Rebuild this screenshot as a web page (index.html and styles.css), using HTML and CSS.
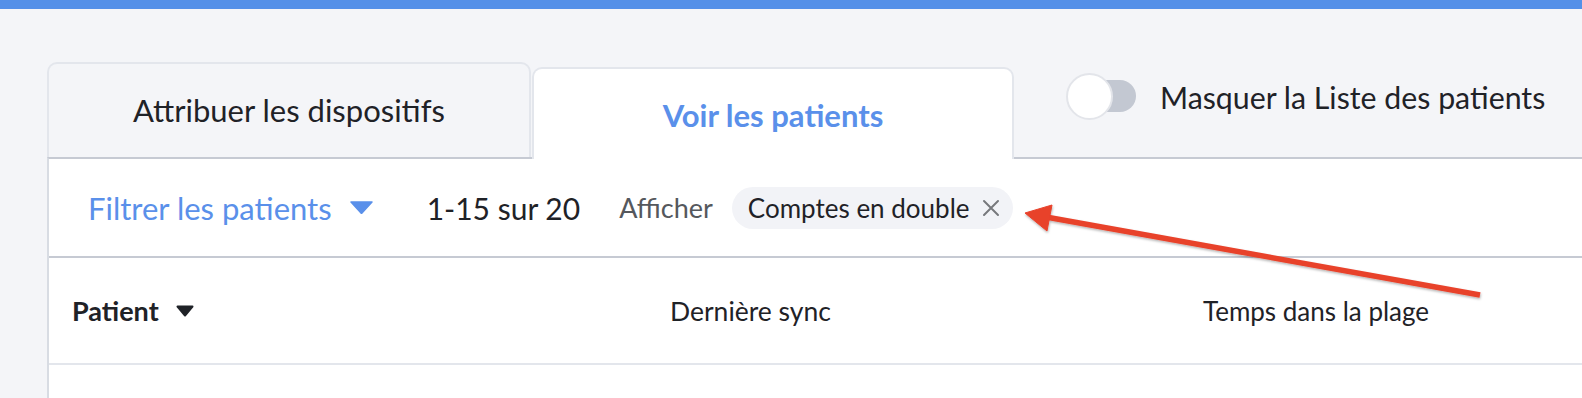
FILE: index.html
```html
<!DOCTYPE html>
<html lang="fr">
<head>
<meta charset="utf-8">
<title>Patients</title>
<link rel="stylesheet" href="styles.css">
</head>
<body>
<div class="topbar"></div>
<div class="main">
  <div class="tabs">
    <div class="tab">Attribuer les dispositifs</div>
    <div class="tab tab-active">Voir les patients</div>
    <div class="toggle-wrap">
      <div class="toggle"><div class="track"></div><div class="knob"></div></div>
      <span class="toggle-label">Masquer la Liste des patients</span>
    </div>
  </div>
  <div class="panel">
    <div class="filter-row">
      <span class="filter">Filtrer les patients</span>
      <svg class="caret-blue" width="23" height="13" viewBox="0 0 23 13"><path d="M1 1 H22 L11.5 12.5 Z" fill="#5a90ea" stroke="#5a90ea" stroke-width="1.5" stroke-linejoin="round"/></svg>
      <span class="count">1-15 sur 20</span>
      <span class="show">Afficher</span>
      <span class="chip">Comptes en double
        <svg class="chip-x" width="18" height="18" viewBox="0 0 18 18"><path d="M2 2 L16 16 M16 2 L2 16" stroke="#77797d" stroke-width="2" stroke-linecap="round"/></svg>
      </span>
    </div>
    <div class="head-row">
      <div class="col col-patient">Patient
        <svg class="caret-dark" width="18" height="12" viewBox="0 0 18 12"><path d="M1.5 1.5 H16.5 L9 10.5 Z" fill="#1f2227" stroke="#1f2227" stroke-width="2" stroke-linejoin="round"/></svg>
      </div>
      <div class="col">Dernière sync</div>
      <div class="col col-range">Temps dans la plage</div>
    </div>
  </div>
</div>
<svg class="annotation" width="1582" height="398" viewBox="0 0 1582 398">
  <defs>
    <filter id="sh" x="-10%" y="-50%" width="120%" height="200%">
      <feDropShadow dx="0.5" dy="1.5" stdDeviation="1.2" flood-color="#000" flood-opacity="0.3"/>
    </filter>
  </defs>
  <g filter="url(#sh)" fill="#e8422b" stroke="#e8422b">
    <line x1="1480" y1="295" x2="1046" y2="217" stroke-width="5.5"/>
    <path d="M1025 213 L1052 205 L1047 231 Z" stroke-width="1" stroke-linejoin="round"/>
  </g>
</svg>
</body>
</html>
```
FILE: styles.css
```css
* { box-sizing: border-box; }
html, body { margin: 0; padding: 0; }
body {
  background: #f4f5f8;
  font-family: Lato, "Open Sans", sans-serif;
  color: #1f2227;
  width: 1582px;
  height: 398px;
  overflow: hidden;
  position: relative;
}
.topbar { height: 9px; background: #5490e8; }
.main { padding: 53px 0 0 47px; }
.tabs {
  display: flex;
  align-items: flex-end;
  height: 95px;
}
.tab {
  width: 484px;
  height: 95px;
  border: 2px solid #e3e6ec;
  border-bottom: none;
  border-radius: 10px 10px 0 0;
  display: flex;
  align-items: center;
  justify-content: center;
  font-size: 31px;
  padding-bottom: 2px;
}
.tab-active {
  width: 482px;
  height: 92px;
  margin-left: 1px;
  background: #fff;
  color: #5a90ea;
  font-weight: 700;
  position: relative;
  z-index: 1;
  margin-bottom: -2px;
  padding-bottom: 0;
  padding-top: 2px;
}
.toggle-wrap {
  align-self: flex-start;
  display: flex;
  align-items: center;
  margin-left: 52px;
  margin-top: 11px;
}
.toggle {
  position: relative;
  width: 70px;
  height: 47px;
}
.track {
  position: absolute;
  left: 14px;
  top: 7px;
  width: 56px;
  height: 32px;
  border-radius: 16px;
  background: #c3c8d2;
}
.knob {
  position: absolute;
  left: 0;
  top: 0;
  width: 47px;
  height: 47px;
  border-radius: 50%;
  background: #fff;
  border: 2px solid #e3e5ea;
}
.toggle-label {
  margin-left: 24px;
  font-size: 30.3px;
}
.panel {
  background: #fff;
  border-top: 2px solid #c6cad3;
  border-left: 2px solid #d8dce3;
  height: 241px;
}
.filter-row {
  height: 99px;
  display: flex;
  align-items: center;
  padding-left: 39px;
  border-bottom: 2px solid #c6cad3;
}
.filter { color: #5a90ea; font-size: 31px; }
.caret-blue { margin-left: 18px; }
.count { margin-left: 54px; font-size: 30px; }
.show { margin-left: 39px; font-size: 27px; color: #55585d; }
.chip {
  margin-left: 19px;
  height: 42px;
  display: inline-flex;
  align-items: center;
  padding: 0 13px 0 16px;
  border-radius: 21px;
  background: #f2f3f7;
  font-size: 26px;
}
.chip-x { margin-left: 12px; }
.head-row {
  height: 107px;
  display: grid;
  grid-template-columns: 598px 533px 1fr;
  align-items: center;
  padding-left: 23px;
  border-bottom: 2px solid #e3e6ec;
  font-size: 26.5px;
}
.col-range { font-size: 26px; }
.col-patient {
  font-weight: 700;
  display: flex;
  align-items: center;
  font-size: 27px;
}
.caret-dark { margin-left: 17px; }
.annotation {
  position: absolute;
  left: 0;
  top: 0;
  pointer-events: none;
}
```
